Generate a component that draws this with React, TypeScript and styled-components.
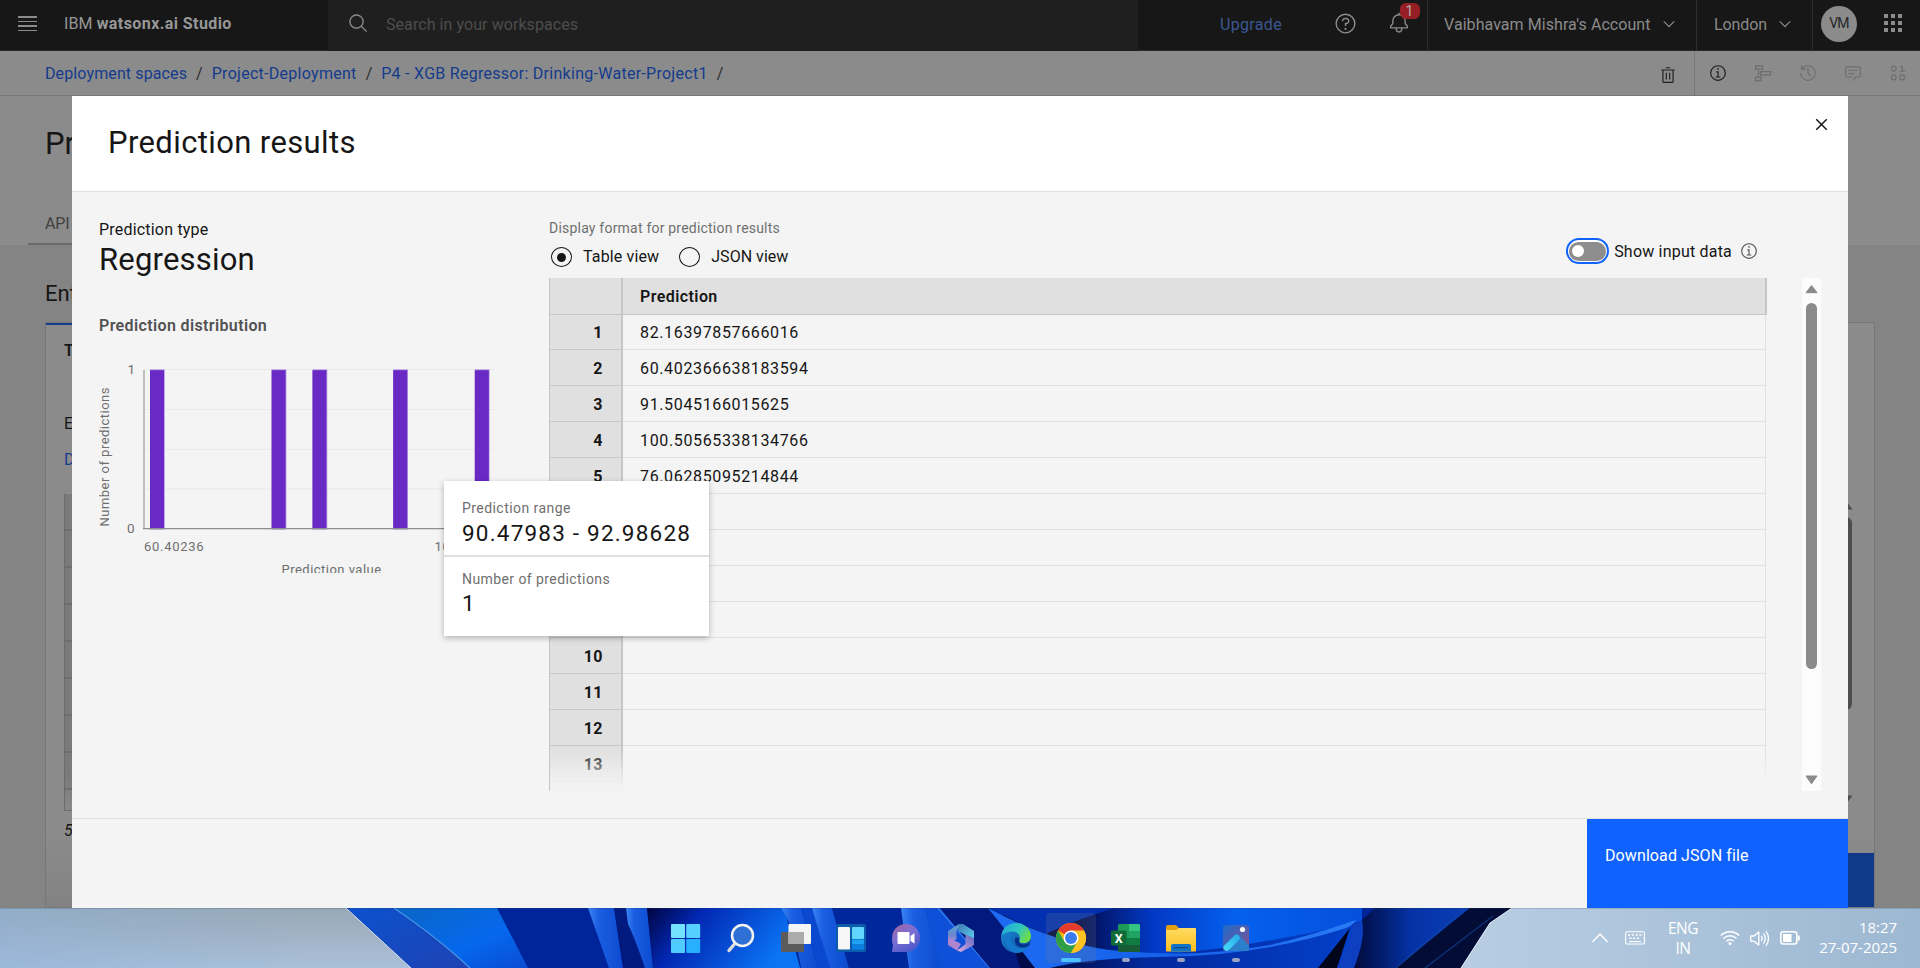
import React from "react";
import styled, { createGlobalStyle, css } from "styled-components";

const GlobalStyle = createGlobalStyle`
  * { box-sizing: border-box; }
  body { margin: 0; overflow: hidden; font-family: Roboto, "Liberation Sans", sans-serif; color: #161616; }
  svg { display: block; flex: none; }
`;

const Screen = styled.div`
  position: relative;
  display: flex;
  flex-direction: column;
  width: 1920px;
  height: 968px;
  overflow: hidden;
`;

/* ---------- text ---------- */

type TextProps = { $size?: number; $line?: number; $track?: number; $weight?: number; $color?: string; $top?: number };

const Text = styled.span<TextProps>`
  display: block;
  white-space: nowrap;
  margin-top: ${(p) => p.$top ?? 0}px;
  font-size: ${(p) => p.$size ?? 16}px;
  line-height: ${(p) => p.$line ?? 22}px;
  letter-spacing: ${(p) => p.$track ?? 0}px;
  font-weight: ${(p) => p.$weight ?? 400};
  color: ${(p) => p.$color ?? "#161616"};
`;

const Spacer = styled.span<{ $w: number }>`
  flex: none;
  width: ${(p) => p.$w}px;
`;

/* ---------- icons ---------- */

const ring = "M16,30A14,14,0,1,1,30,16,14,14,0,0,1,16,30ZM16,4A12,12,0,1,0,28,16,12,12,0,0,0,16,4Z";

const Icon = ({ size, color, children, box = 32 }: { size: number; color: string; box?: number; children: React.ReactNode }) => (
  <svg width={size} height={size} viewBox={`0 0 ${box} ${box}`} fill={color}>
    {children}
  </svg>
);

const InfoIcon = ({ color }: { color: string }) => (
  <Icon size={18} color={color}>
    <path d="M17 22V13H13V15H15V22H12V24H20V22Z" />
    <path d="M16,7a1.5,1.5,0,1,0,1.5,1.5A1.5,1.5,0,0,0,16,7Z" />
    <path d={ring} />
  </Icon>
);

const Chevron = () => (
  <Icon size={18} color="#8b8b8b" box={16}>
    <path d="M8 11 3 6 3.7 5.3 8 9.6 12.3 5.3 13 6z" />
  </Icon>
);

/* ---------- top bar ---------- */

const TopBar = styled.header`
  display: flex;
  height: 51px;
  flex: none;
  background: #171717;
`;

const Brand = styled.div`
  display: flex;
  align-items: center;
  width: 328px;
  padding: 0 0 2px 18px;
  border-bottom: 1px solid #2a2a2a;
`;

const MenuLines = styled.div`
  display: flex;
  flex-direction: column;
  gap: 3px;
  width: 18.5px;
  margin: -1px 27.5px 0 0;
  i { height: 1.5px; background: #8b8b8b; }
`;

const SearchBox = styled.div`
  display: flex;
  align-items: center;
  gap: 17px;
  width: 810px;
  padding: 0 0 3px 20px;
  background: #1f1f1f;
  svg { margin-top: -2px; }
`;

const TopCell = styled.div<{ $width: number; $line?: boolean; $pad?: number }>`
  display: flex;
  align-items: center;
  justify-content: ${(p) => (p.$pad ? "flex-start" : "center")};
  width: ${(p) => p.$width}px;
  padding: 0 0 2px ${(p) => p.$pad ?? 0}px;
  border-bottom: 1px solid #2a2a2a;
  border-left: ${(p) => (p.$line ? "1px solid #2d2d2d" : "0")};
`;

const IconCell = styled(TopCell)`
  padding-bottom: 4px;
`;

const BellHolder = styled.div`
  position: relative;
`;

const Badge = styled.span`
  position: absolute;
  left: 12px;
  top: -9px;
  width: 20px;
  height: 16px;
  border-radius: 6px;
  background: #961f26;
  color: #b0b0b0;
  font-size: 14px;
  line-height: 16px;
  text-align: center;
`;

const Avatar = styled.div`
  width: 36px;
  height: 36px;
  border-radius: 50%;
  background: #8b8b8b;
  color: #262626;
  font-size: 14px;
  line-height: 34px;
  letter-spacing: -0.9px;
  text-align: center;
`;

const Dots = styled.div`
  display: grid;
  grid-template-columns: repeat(3, 4px);
  gap: 3px;
  i { height: 4px; background: #8b8b8b; }
`;

const TopBarView = () => (
  <TopBar>
    <Brand>
      <MenuLines><i /><i /><i /><i /></MenuLines>
      <Text $color="#979797" $track={0.1}>IBM&nbsp;</Text>
      <Text $color="#979797" $weight={700} $track={0.42}>watsonx.ai Studio</Text>
    </Brand>
    <SearchBox>
      <Icon size={21} color="#8b8b8b">
        <path d="M29,27.5859l-7.5521-7.5521a11.0177,11.0177,0,1,0-1.4141,1.4141L27.5859,29ZM4,13a9,9,0,1,1,9,9A9.01,9.01,0,0,1,4,13Z" />
      </Icon>
      <Text $color="#4d4d4d" $track={0.07} $top={1}>Search in your workspaces</Text>
    </SearchBox>
    <TopCell $width={182} $pad={82}>
      <Text $color="#3b5793" $track={0.33} $top={1}>Upgrade</Text>
    </TopCell>
    <IconCell $width={50}>
      <Icon size={23} color="#8b8b8b">
        <path d={ring} />
        <circle cx="16" cy="23.5" r="1.5" />
        <path d="M17,8h-1.5c-2.5,0-4.5,2-4.5,4.5V13h2v-0.5c0-1.4,1.1-2.5,2.5-2.5H17c1.4,0,2.5,1.1,2.5,2.5S18.4,15,17,15h-2v4.5h2V17c2.5,0,4.5-2,4.5-4.5S19.5,8,17,8z" />
      </Icon>
    </IconCell>
    <IconCell $width={57}>
      <BellHolder>
        <Icon size={22} color="#8b8b8b">
          <path d="M28.7071,19.293,26,16.5859V13a10.0136,10.0136,0,0,0-9-9.9492V1H15V3.0508A10.0136,10.0136,0,0,0,6,13v3.5859L3.2929,19.293A1,1,0,0,0,3,20v3a1,1,0,0,0,1,1h7v.7768a5.152,5.152,0,0,0,4.5,5.1987A5.0057,5.0057,0,0,0,21,25V24h7a1,1,0,0,0,1-1V20A1,1,0,0,0,28.7071,19.293ZM19,25a3,3,0,0,1-6,0V24h6Zm8-3H5V20.4141L7.707,17.707A1,1,0,0,0,8,17V13a8,8,0,0,1,16,0v4a1,1,0,0,0,.293.707L27,20.4141Z" />
        </Icon>
        <Badge>1</Badge>
      </BellHolder>
    </IconCell>
    <TopCell $width={269} $line $pad={16}>
      <Text $color="#8b8b8b" $track={0.06} $top={1}>Vaibhavam Mishra's Account</Text>
      <Spacer $w={9} />
      <Chevron />
    </TopCell>
    <TopCell $width={116} $line $pad={17}>
      <Text $color="#8b8b8b" $track={-0.09} $top={1}>London</Text>
      <Spacer $w={9} />
      <Chevron />
    </TopCell>
    <TopCell $width={53} $line>
      <Avatar>VM</Avatar>
    </TopCell>
    <IconCell $width={55}>
      <Dots>{Array.from({ length: 9 }, (_, i) => <i key={i} />)}</Dots>
    </IconCell>
  </TopBar>
);

/* ---------- breadcrumb bar ---------- */

const CrumbBar = styled.nav`
  display: flex;
  flex: none;
  height: 45px;
  background: #8b8b8b;
  border-bottom: 1px solid #767676;
`;

const Crumbs = styled.div`
  display: flex;
  align-items: center;
  gap: 9px;
  flex: 1;
  padding: 1px 0 0 45px;
`;

const ToolCell = styled.div<{ $width?: number; $line?: boolean }>`
  display: flex;
  align-items: center;
  justify-content: center;
  width: ${(p) => p.$width ?? 44.8}px;
  border-right: ${(p) => (p.$line ? "1px solid #767676" : "0")};
  padding: ${(p) => (p.$line ? "4px 0 0 1px" : "0")};
`;

const faded = "#6d6d6d";

const CrumbBarView = () => (
  <CrumbBar>
    <Crumbs>
      <Text $color="#143b8c" $track={0.12}>Deployment spaces</Text>
      <Text $color="#2b2b2b">/</Text>
      <Text $color="#143b8c" $track={0.28}>Project-Deployment</Text>
      <Text $color="#2b2b2b">/</Text>
      <Text $color="#143b8c" $track={0.275}>P4 - XGB Regressor: Drinking-Water-Project1</Text>
      <Text $color="#2b2b2b">/</Text>
    </Crumbs>
    <ToolCell $width={54} $line>
      <Icon size={18} color="#1f1f1f">
        <path d="M12 12h2v12h-2zM18 12h2v12h-2zM12 2h8v2h-8z" />
        <path d="M4,6V8H6V28a2,2,0,0,0,2,2H24a2,2,0,0,0,2-2V8h2V6ZM8,28V8H24V28Z" />
      </Icon>
    </ToolCell>
    <ToolCell $width={46}><InfoIcon color="#1b1b1b" /></ToolCell>
    <ToolCell>
      <svg width="18" height="18" viewBox="0 0 18 18" fill="none" stroke={faded} strokeWidth="1.2">
        <rect x="1.6" y="1.8" width="7" height="3.4" />
        <rect x="6.6" y="7.6" width="10" height="3.4" />
        <rect x="1.6" y="13.2" width="5.4" height="3.6" />
        <path d="M4.2 5.2v4.2h2.4M4.2 9.4v3.8" strokeWidth="0.9" />
      </svg>
    </ToolCell>
    <ToolCell>
      <Icon size={18} color={faded}>
        <path d="M20.59 22 15 16.41 15 7 17 7 17 15.58 22 20.59 20.59 22z" />
        <path d="M16,2A13.94,13.94,0,0,0,6,6.23V2H4v8h8V8H7.08A12,12,0,1,1,4,16H2A14,14,0,1,0,16,2Z" />
      </Icon>
    </ToolCell>
    <ToolCell>
      <Icon size={18} color={faded}>
        <path d="M17.74,30,16,29l4-7h6a2,2,0,0,0,2-2V8a2,2,0,0,0-2-2H6A2,2,0,0,0,4,8V20a2,2,0,0,0,2,2h9v2H6a4,4,0,0,1-4-4V8A4,4,0,0,1,6,4H26a4,4,0,0,1,4,4V20a4,4,0,0,1-4,4H21.16Z" />
        <path d="M8 10h16v2H8zM8 16h10v2H8z" />
      </Icon>
    </ToolCell>
    <ToolCell>
      <svg width="18" height="18" viewBox="0 0 18 18" fill="none" stroke={faded} strokeWidth="1.2">
        <rect x="2.6" y="2.2" width="4.4" height="5" rx="2" />
        <rect x="2.6" y="10.8" width="4.4" height="5" rx="2" />
        <rect x="11" y="10.8" width="4.4" height="5" rx="2" />
        <path d="M11.3 3.2l2-1v5M11 7.2h4.8" />
      </svg>
    </ToolCell>
  </CrumbBar>
);

/* ---------- page behind the dialog ---------- */

const PageHead = styled.div`
  flex: none;
  display: flex;
  flex-direction: column;
  height: 149px;
  background: #8b8b8b;
  padding: 27px 0 0 45px;
`;

const TabLine = styled.div`
  width: 200px;
  height: 2px;
  margin: 8px 0 0 -17px;
  background: #6c6c6c;
`;

const PageBody = styled.div`
  flex: none;
  display: flex;
  flex-direction: column;
  height: 663px;
  padding: 34px 45px 0;
  background: #848484;
`;

const Card = styled.div`
  display: flex;
  justify-content: space-between;
  width: 1830px;
  height: 586px;
  margin-top: 14px;
  border: 1px solid #777;
  background: linear-gradient(#8b8b8b 0 510px, #828282);
`;

const CardLeft = styled.div`
  display: flex;
  flex-direction: column;
  width: 300px;
  padding-left: 18px;
  border-top: 2px solid #143b8c;
`;

const GhostTable = styled.div`
  display: flex;
  flex-direction: column;
  height: 317px;
  margin: 23px 0 9px;
  border: 1px solid #6b6b6b;
  border-top: 0;
  overflow: hidden;
  background: linear-gradient(#7a7a7a 0 280px, #888);
  i { flex: none; height: 37px; border-bottom: 2px solid #6d6d6d; }
`;

const RowCount = styled(Text)`
  font-style: italic;
`;

const CardRight = styled.div`
  display: flex;
  flex-direction: column;
  align-items: flex-end;
  width: 200px;
  padding-top: 178px;
`;

const GhostThumb = styled.div`
  width: 12px;
  height: 195px;
  margin: 7px 22px 85px;
  border-radius: 6px;
  background: #4d4d4d;
`;

const GhostArrow = styled.svg`
  margin-right: 21px;
`;

const GhostButton = styled.div`
  width: 200px;
  height: 54px;
  margin-top: 49px;
  background: #123a8a;
`;

const PageView = () => (
  <>
    <PageHead>
      <Text $size={31} $line={42}>Pr</Text>
      <Text $color="#404040" $top={48} $track={-0.2}>API</Text>
      <TabLine />
    </PageHead>
    <PageBody>
      <Text $size={22} $line={29}>Enter</Text>
      <Card>
        <CardLeft>
          <Text $line={51} $weight={600}>T</Text>
          <Text $top={37}>E</Text>
          <Text $top={14} $color="#143b8c">D</Text>
          <GhostTable>
            {Array.from({ length: 8 }, (_, i) => <i key={i} />)}
          </GhostTable>
          <RowCount>5</RowCount>
        </CardLeft>
        <CardRight>
          <GhostArrow width="13" height="9" viewBox="0 0 13 9"><path d="M6.5 0.5L12.5 8.5H0.5Z" fill="#4d4d4d" /></GhostArrow>
          <GhostThumb />
          <GhostArrow width="13" height="9" viewBox="0 0 13 9"><path d="M0.5 0.5H12.5L6.5 8.5Z" fill="#4d4d4d" /></GhostArrow>
          <GhostButton />
        </CardRight>
      </Card>
    </PageBody>
  </>
);

/* ---------- dialog ---------- */

const Dialog = styled.section`
  position: absolute;
  left: 72px;
  top: 96px;
  display: flex;
  flex-direction: column;
  width: 1776px;
  height: 812px;
  background: #f4f4f4;
`;

const DialogHead = styled.div`
  display: flex;
  justify-content: space-between;
  flex: none;
  height: 96px;
  padding: 27px 15px 0 36px;
  border-bottom: 1px solid #e0e0e0;
  background: #fff;
`;

const CloseButton = styled.div`
  margin-top: -10px;
`;

const DialogBody = styled.div`
  display: flex;
  flex: none;
  height: 626px;
`;

const Summary = styled.div`
  display: flex;
  flex-direction: column;
  flex: none;
  width: 477px;
  padding: 27px 0 0 27px;
`;

const Results = styled.div`
  flex: 1;
  display: flex;
  flex-direction: column;
`;

const Controls = styled.div`
  display: flex;
  justify-content: space-between;
  height: 86px;
  padding-right: 90px;
`;

const FormatGroup = styled.div`
  padding-top: 26px;
`;

const RadioRow = styled.div`
  display: flex;
  align-items: center;
  height: 20px;
  margin: 9px 0 0 2px;
`;

const Radio = styled.span<{ $on?: boolean }>`
  display: grid;
  place-items: center;
  width: 21px;
  height: 20px;
  margin-right: 11px;
  border: 1px solid #161616;
  border-radius: 50%;
  &::after {
    content: "";
    width: 9px;
    height: 9px;
    border-radius: 50%;
    background: ${(p) => (p.$on ? "#161616" : "transparent")};
  }
`;

const ToggleGroup = styled.div`
  display: flex;
  align-items: center;
  height: 26px;
  margin-top: 46px;
`;

const Toggle = styled.span`
  display: flex;
  align-items: center;
  width: 43px;
  height: 26px;
  padding: 1px;
  margin-right: 5px;
  border: 2px solid #0f62fe;
  border-radius: 13px;
  background: #fff;
`;

const Track = styled.span`
  display: flex;
  align-items: center;
  flex: 1;
  height: 19px;
  padding-left: 3px;
  border-radius: 10px;
  background: #8d8d8d;
  &::after {
    content: "";
    width: 12px;
    height: 12px;
    border-radius: 50%;
    background: #fff;
  }
`;

const GridArea = styled.div`
  display: flex;
  justify-content: space-between;
  width: 1272px;
  height: 513px;
`;

const Table = styled.div`
  position: relative;
  display: flex;
  flex-direction: column;
  width: 1218px;
  height: 513px;
  border-left: 1px solid #c6c6c6;
  overflow: hidden;
  &::after {
    content: "";
    position: absolute;
    left: 0;
    right: 0;
    bottom: 0;
    height: 42px;
    background: linear-gradient(rgba(244, 244, 244, 0), rgba(244, 244, 244, 0.9) 85%);
  }
`;

const headCell = css`
  background: #e0e0e0;
  border-bottom: 1px solid #c6c6c6;
`;

const Line = styled.div<{ $height: number }>`
  display: flex;
  flex: none;
  height: ${(p) => p.$height}px;
`;

const IndexCell = styled.div`
  ${headCell}
  display: flex;
  align-items: center;
  justify-content: flex-end;
  flex: none;
  width: 73px;
  padding: 2px 18px 0 0;
  border-right: 2px solid #c6c6c6;
`;

const DataCell = styled.div<{ $head?: boolean }>`
  display: flex;
  align-items: center;
  flex: 1;
  padding: 2px 0 0 17px;
  border-bottom: 1px solid #e0e0e0;
  border-right: 1px solid #e0e0e0;
  margin-right: 1px;
  ${(p) => p.$head && css`${headCell} margin-right: 0; border-right: 2px solid #c6c6c6;`}
`;

const ScrollBar = styled.div`
  display: flex;
  flex-direction: column;
  align-items: center;
  width: 19px;
  height: 513px;
  padding: 6px 0;
  background: #fcfcfc;
`;

const Thumb = styled.div`
  width: 11px;
  height: 369px;
  margin: 9px 0 106px;
  border-radius: 6px;
  background: #8b8b8b;
`;

const ChartHolder = styled.div`
  margin-top: 23px;
`;

const DialogFoot = styled.div`
  display: flex;
  justify-content: flex-end;
  flex: none;
  height: 90px;
  border-top: 1px solid #e0e0e0;
`;

const DownloadButton = styled.div`
  width: 261px;
  height: 89px;
  padding: 26px 0 0 18px;
  background: #0f62fe;
`;

const Tooltip = styled.div`
  position: absolute;
  left: 372px;
  top: 385px;
  width: 265px;
  height: 155px;
  background: #fff;
  box-shadow: 0 2px 6px rgba(0, 0, 0, 0.28);
`;

const TipBlock = styled.div<{ $height: number }>`
  height: ${(p) => p.$height}px;
  padding: 17px 0 0 18px;
  & + & { padding-top: 12px; border-top: 2px solid #e0e0e0; }
`;

const values = ["82.16397857666016", "60.402366638183594", "91.5045166015625", "100.50565338134766", "76.06285095214844"];
const bars = [150, 271.6, 312.5, 393.2, 474.8];

const Chart = () => (
  <svg width="420" height="213" viewBox="99 360 420 213" fontFamily="Roboto, sans-serif" fontSize="13" fill="#6f6f6f">
    {[369.5, 409.5, 449.3, 489].map((y) => (
      <path key={y} d={`M145 ${y}H495`} stroke="#e9e9e9" />
    ))}
    {bars.map((x) => (
      <g key={x}>
        <rect x={x} y="369.3" width="14.8" height="160" fill="#b79be2" />
        <rect x={x} y="370.2" width="14" height="159" fill="#6929c4" />
      </g>
    ))}
    <path d="M144 370V529" stroke="#b4b4b4" strokeWidth="1.7" />
    <path d="M143 528.6H495" stroke="#8d8d8d" strokeWidth="1.2" />
    <text x="127.5" y="374" fontSize="13.5">1</text>
    <text x="127" y="533" fontSize="13.5">0</text>
    <text x="144" y="551" letterSpacing="0.73">60.40236</text>
    <text x="434.5" y="551" letterSpacing="0.73">100.5056</text>
    <text x="281.5" y="573.5" letterSpacing="0.48">Prediction value</text>
    <text transform="translate(108.5 526.5) rotate(-90)" letterSpacing="0.48">Number of predictions</text>
  </svg>
);

const DialogView = () => (
  <Dialog>
    <DialogHead>
      <Text $size={31} $line={40} $track={0.38}>Prediction results</Text>
      <CloseButton>
        <Icon size={23} color="#161616">
          <path d="M17.4141 16 24 9.4141 22.5859 8 16 14.5859 9.4143 8 8 9.4141 14.5859 16 8 22.5859 9.4143 24 16 17.4141 22.5859 24 24 22.5859 17.4141 16z" />
        </Icon>
      </CloseButton>
    </DialogHead>
    <DialogBody>
      <Summary>
        <Text $track={0.2}>Prediction type</Text>
        <Text $size={31} $line={37} $track={0.2}>Regression</Text>
        <Text $weight={600} $color="#525252" $track={0.37} $top={37}>Prediction distribution</Text>
        <ChartHolder><Chart /></ChartHolder>
      </Summary>
      <Results>
        <Controls>
          <FormatGroup>
            <Text $size={14} $line={20} $color="#6f6f6f" $track={0.21}>Display format for prediction results</Text>
            <RadioRow>
              <Radio $on />
              <Text $track={0.14}>Table view</Text>
              <Spacer $w={20} />
              <Radio />
              <Text $track={0.03}>JSON view</Text>
            </RadioRow>
          </FormatGroup>
          <ToggleGroup>
            <Toggle><Track /></Toggle>
            <Text $track={0.2} $top={1}>Show input data</Text>
            <Spacer $w={8} />
            <InfoIcon color="#525252" />
          </ToggleGroup>
        </Controls>
        <GridArea>
          <Table>
            <Line $height={37}>
              <IndexCell />
              <DataCell $head><Text $weight={600} $track={0.42}>Prediction</Text></DataCell>
            </Line>
            {Array.from({ length: 14 }, (_, i) => (
              <Line key={i} $height={i === 0 ? 35 : 36}>
                <IndexCell><Text $weight={700} $track={0.5}>{i < 13 ? i + 1 : ""}</Text></IndexCell>
                <DataCell><Text $track={0.64}>{values[i] ?? ""}</Text></DataCell>
              </Line>
            ))}
          </Table>
          <ScrollBar>
            <svg width="13" height="10" viewBox="0 0 13 10"><path d="M6.5 1.5L12 8.7H1Z" fill="#8b8b8b" stroke="#8b8b8b" strokeLinejoin="round" /></svg>
            <Thumb />
            <svg width="13" height="10" viewBox="0 0 13 10"><path d="M1 1H12L6.5 8.8Z" fill="#8b8b8b" stroke="#8b8b8b" strokeLinejoin="round" /></svg>
          </ScrollBar>
        </GridArea>
      </Results>
    </DialogBody>
    <DialogFoot>
      <DownloadButton><Text $color="#fff" $track={0.1}>Download JSON file</Text></DownloadButton>
    </DialogFoot>
    <Tooltip>
      <TipBlock $height={74}>
        <Text $size={14} $line={20} $track={0.44} $color="#6f6f6f">Prediction range</Text>
        <Text $size={22.5} $line={30} $track={1.2}>90.47983 - 92.98628</Text>
      </TipBlock>
      <TipBlock $height={81}>
        <Text $size={14} $line={20} $track={0.42} $color="#6f6f6f">Number of predictions</Text>
        <Text $size={22.5} $line={28}>1</Text>
      </TipBlock>
    </Tooltip>
  </Dialog>
);

/* ---------- taskbar ---------- */

const TaskBar = styled.footer`
  position: relative;
  display: flex;
  justify-content: flex-end;
  flex: none;
  height: 60px;
  isolation: isolate;
`;

const WallpaperSvg = styled.svg`
  position: absolute;
  inset: 0;
  z-index: -1;
`;

const Wallpaper = () => (
  <WallpaperSvg width="1920" height="60" viewBox="0 0 1920 60" preserveAspectRatio="none">
    <defs>
      <linearGradient id="skyL" x1="0" y1="0" x2="0" y2="1"><stop offset="0" stopColor="#97a9b6" /><stop offset="0.5" stopColor="#a2b3c6" /><stop offset="1" stopColor="#a9c0da" /></linearGradient>
      <linearGradient id="skyTint" x1="0" y1="0" x2="1" y2="0"><stop offset="0" stopColor="#8ab0dc" stopOpacity=".45" /><stop offset="1" stopColor="#8ab0dc" stopOpacity="0" /></linearGradient>
      <linearGradient id="skyR" x1="0" y1="0" x2="1" y2="0"><stop offset="0" stopColor="#b8cde2" /><stop offset="1" stopColor="#9db8d2" /></linearGradient>
      <linearGradient id="r1" x1="0" y1="0" x2="1" y2="1"><stop offset="0" stopColor="#0b52cd" /><stop offset="1" stopColor="#1f42b4" /></linearGradient>
      <linearGradient id="r2" x1="0" y1="0" x2="1" y2="1"><stop offset="0" stopColor="#0a66c4" /><stop offset=".6" stopColor="#0568ee" /><stop offset="1" stopColor="#0b4bd2" /></linearGradient>
      <linearGradient id="core" x1="0" y1="0" x2="1" y2=".3"><stop offset="0" stopColor="#010441" /><stop offset=".35" stopColor="#0228b4" /><stop offset="1" stopColor="#0a74f4" /></linearGradient>
      <linearGradient id="rib" x1="0" y1="0" x2="1" y2="0"><stop offset="0" stopColor="#3a86f4" /><stop offset=".3" stopColor="#1b5ee2" /><stop offset="1" stopColor="#0c4bd0" /></linearGradient>
      <linearGradient id="sweep" x1="0" y1="0" x2="1" y2="0"><stop offset="0" stopColor="#00041c" /><stop offset=".22" stopColor="#010c4c" /><stop offset=".42" stopColor="#0238c4" /><stop offset=".65" stopColor="#0560ee" /><stop offset="1" stopColor="#0550dc" /></linearGradient>
      <linearGradient id="wave" x1="0" y1="0" x2="1" y2="0"><stop offset="0" stopColor="#1d6cf2" /><stop offset=".5" stopColor="#1660ea" /><stop offset="1" stopColor="#2a7cf6" /></linearGradient>
      <linearGradient id="fold" x1="0" y1="0" x2="1" y2="0"><stop offset="0" stopColor="#010a3c" /><stop offset=".5" stopColor="#0533a6" /><stop offset="1" stopColor="#0a3eb4" /></linearGradient>
      <linearGradient id="low" x1="0" y1="0" x2="1" y2="0"><stop offset="0" stopColor="#010836" /><stop offset=".35" stopColor="#02289c" /><stop offset="1" stopColor="#0341cc" /></linearGradient>
    </defs>
    <rect width="420" height="60" fill="url(#skyL)" />
    <rect width="300" height="60" fill="url(#skyTint)" />
    <path d="M346 0H1512L1490 15L1461 60H411Z" fill="#00259a" />
    <path d="M347 0H394L472 60H411Z" fill="url(#r1)" />
    <path d="M394 0H497L528 60H470Q440 32 394 0Z" fill="url(#r2)" />
    <path d="M394 0Q440 32 470 60" stroke="#4390e8" strokeWidth="1.5" fill="none" />
    <path d="M588 0H614L623 60H609Z" fill="url(#rib)" />
    <path d="M614 0H627L645 60H623Z" fill="#001a80" />
    <path d="M626 0H647L653 60H645Q634 28 628 16Z" fill="url(#rib)" />
    <path d="M647 0H784L800 60H653Z" fill="url(#core)" />
    <path d="M781 0H801L818 60H801Q794 18 781 0Z" fill="url(#rib)" />
    <path d="M801 0H813L830 60H818Z" fill="#0a48d0" />
    <path d="M812 0H832L849 60H830Z" fill="url(#rib)" />
    <path d="M832 0H901L910 60H849Z" fill="#01279c" />
    <path d="M901 0H925L942 60H909Z" fill="url(#rib)" />
    <path d="M925 0H940L990 60H941Z" fill="#0e50d8" />
    <path d="M938 0L990 60" stroke="#3378ee" strokeWidth="1.5" />
    <path d="M940 0H990L1060 60H990Z" fill="#031a7c" />
    <path d="M1010 24L1050 60H1020Z" fill="#010a48" />
    <path d="M1040 0H1362V13Q1240 48 1150 49Q1060 44 1000 8Z" fill="url(#sweep)" />
    <path d="M990 0H1114Q1070 14 1046 26Q1015 14 990 0Z" fill="#0230b0" />
    <path d="M1030 60Q1060 50 1110 48Q1200 50 1362 14L1340 60Z" fill="url(#low)" />
    <path d="M988 0Q1060 38 1120 43Q1200 50 1270 37Q1310 28 1356 12Q1352 18 1346 20Q1260 48 1160 49Q1090 50 1050 60H1035Q1012 30 988 0Z" fill="url(#wave)" />
    <path d="M1350 20L1318 60H1337Z" fill="#02051c" />
    <path d="M1352 16Q1352 34 1337 60H1354Q1366 28 1364 13Z" fill="#0d3fc0" />
    <path d="M1362 12L1375 0H1470L1396 60H1354Q1366 30 1362 12Z" fill="url(#fold)" />
    <path d="M1470 0H1512L1490 15L1461 60H1396Z" fill="#020c34" />
    <path d="M1466 0L1396 60M1493 8L1425 60" stroke="#1648a8" strokeWidth="1.5" opacity=".6" />
    <path d="M1512 0H1920V60H1461L1490 15Z" fill="url(#skyR)" />
    <path d="M1512 0L1490 15L1461 60M346 0L411 60" stroke="#dbe8f6" strokeWidth="1" fill="none" />
    <rect width="1920" height="1" fill="#30405a" opacity=".2" />
  </WallpaperSvg>
);

const Apps = styled.div`
  position: absolute;
  left: 661px;
  top: 5px;
  display: flex;
  gap: 5px;
`;

const AppTile = styled.div<{ $state?: "active" | "open" }>`
  display: flex;
  flex-direction: column;
  align-items: center;
  justify-content: space-between;
  width: 50px;
  height: 50px;
  padding: 9px 0 1px;
  border-radius: 4px;
  background: ${(p) => (p.$state === "active" ? "rgba(120, 124, 140, 0.2)" : "transparent")};
  &::after {
    content: "";
    width: ${(p) => (p.$state === "active" ? 20 : 8)}px;
    height: 4px;
    border-radius: 2px;
    background: ${(p) => (p.$state === "active" ? "#4cc2ff" : p.$state ? "#9aa3c4" : "transparent")};
  }
`;

const Glyph = ({ children }: { children: React.ReactNode }) => (
  <svg width="32" height="32" viewBox="0 0 32 32">{children}</svg>
);

const AppsView = () => (
  <Apps>
    <AppTile>
      <Glyph>
        <rect x="1" y="2" width="14" height="14" rx="1" fill="#74e2ff" />
        <rect x="16.2" y="2" width="14" height="14" rx="1" fill="#55cfff" />
        <rect x="1" y="17" width="14" height="14" rx="1" fill="#4fcbff" />
        <rect x="16.2" y="17" width="14" height="14" rx="1" fill="#27b0ff" />
      </Glyph>
    </AppTile>
    <AppTile>
      <Glyph>
        <path d="M9.5 22L4 28.5" stroke="#dcdcdc" strokeWidth="3.4" strokeLinecap="round" />
        <circle cx="17.5" cy="13.5" r="10.5" fill="#2f70d6" stroke="#f2f2f2" strokeWidth="2.5" />
      </Glyph>
    </AppTile>
    <AppTile>
      <Glyph>
        <rect x="1" y="10" width="23" height="20" rx="1" fill="#5b5b5b" />
        <rect x="8.5" y="2" width="22.5" height="20" rx="1" fill="#f4f4f4" />
        <rect x="8.5" y="10" width="15.5" height="12" fill="#ababab" />
      </Glyph>
    </AppTile>
    <AppTile>
      <Glyph>
        <rect x="1" y="2" width="30" height="28" rx="2" fill="#0b5cab" />
        <rect x="3" y="5" width="12" height="22.5" rx="1" fill="#f6f6f6" />
        <rect x="17" y="5" width="12" height="12" rx="1" fill="#62d5ff" />
        <rect x="17" y="17.5" width="12" height="5" fill="#1fa2f4" />
        <rect x="17" y="22.8" width="12" height="5" rx="1" fill="#0a7fe4" />
      </Glyph>
    </AppTile>
    <AppTile>
      <Glyph>
        <defs><linearGradient id="chat" x1="0" y1="0" x2=".6" y2="1"><stop offset="0" stopColor="#a8649c" /><stop offset=".5" stopColor="#7a6fd4" /><stop offset="1" stopColor="#5059c9" /></linearGradient></defs>
        <path d="M16 2C24 2 30 8 30 16S24 30 16 30H2L3 23C2 21 2 18.5 2 16C2 8 8 2 16 2Z" fill="url(#chat)" />
        <rect x="7.5" y="10" width="12" height="12" rx="1" fill="#fff" />
        <path d="M20.5 14L24.5 11V21.5L20.5 19Z" fill="#fff" />
      </Glyph>
    </AppTile>
    <AppTile>
      <Glyph>
        <defs>
          <linearGradient id="m1" x1="0" y1="0" x2="0" y2="1"><stop offset="0" stopColor="#5aa4d4" /><stop offset=".5" stopColor="#6a86cc" /><stop offset="1" stopColor="#c28ad4" /></linearGradient>
          <linearGradient id="m2" x1="0" y1="0" x2="1" y2="1"><stop offset="0" stopColor="#3f78b4" /><stop offset="1" stopColor="#5cd0ee" /></linearGradient>
          <linearGradient id="m3" x1="1" y1="0" x2="0" y2="1"><stop offset="0" stopColor="#5a6ac0" /><stop offset="1" stopColor="#e0a6dc" /></linearGradient>
        </defs>
        <path d="M14 2L18 3L11.5 8V17L3 23V9Z" fill="url(#m1)" />
        <path d="M14 2H18L29 9V17L20.5 13L13 9Z" fill="url(#m2)" />
        <path d="M29 16V23L16 30L12 28.5L20.5 22V12.5Z" fill="url(#m3)" />
        <path d="M3 16L11.5 19.5L16 22L12 28.5L3 23Z" fill="#b184d0" />
      </Glyph>
    </AppTile>
    <AppTile>
      <Glyph>
        <defs>
          <linearGradient id="e1" x1="0" y1="0" x2="1" y2=".5"><stop offset="0" stopColor="#1ea2dc" /><stop offset=".6" stopColor="#2fc7c0" /><stop offset="1" stopColor="#6bdc4a" /></linearGradient>
          <linearGradient id="e2" x1="0" y1="0" x2="1" y2="1"><stop offset="0" stopColor="#1b8ad8" /><stop offset="1" stopColor="#0f4f9e" /></linearGradient>
        </defs>
        <circle cx="16" cy="16" r="15" fill="url(#e2)" />
        <path d="M1.5 14C2 6 8 1 16 1C25 1 31 7.5 31 14C31 18.5 27.5 21 24 21C20 21 18.5 19.5 19.5 17.5C21 14 18 9.5 12.5 9.5C7 9.5 2.5 12 1.5 14Z" fill="url(#e1)" />
        <path d="M12.5 9.5C8 15 11 26 22 26C25 26 28 24.5 29 23.5C26.5 28 22 31 16.5 31C9 30.5 4.5 22 7 15C8 12.5 10 10.5 12.5 9.5Z" fill="#1478cc" />
        <path d="M19.5 17.5C18 20 19.5 22.5 23.5 22.5C26.5 22.5 28.5 21.5 30 20L29 23.5C22 28 13.5 24 15 16.5C16.5 15 18.5 15 19.5 17.5Z" fill="#04308c" />
      </Glyph>
    </AppTile>
    <AppTile $state="active">
      <Glyph>
        <circle cx="16" cy="16" r="15" fill="#fbbc05" />
        <path d="M16 16L3 8.5A15 15 0 0 1 29 8.5Z" fill="#e33b2e" />
        <path d="M3 8.5A15 15 0 0 0 16 31L22.5 19.5L16 16L9.5 19.5Z" fill="#2f9e49" />
        <path d="M16 8.5H29A15 15 0 0 1 16 31L22.5 19.5Z" fill="#fcc221" />
        <circle cx="16" cy="16" r="7.5" fill="#fff" />
        <circle cx="16" cy="16" r="6" fill="#3b7ded" />
      </Glyph>
    </AppTile>
    <AppTile $state="open">
      <Glyph>
        <rect x="8" y="2" width="22" height="28" rx="1.5" fill="#1d9a55" />
        <path d="M19 2H28.5A1.5 1.5 0 0 1 30 3.5V9H19Z" fill="#33c481" />
        <path d="M19 9H30V16H19Z" fill="#21a366" />
        <path d="M8 16H30V23H8Z" fill="#107c41" />
        <path d="M8 23H30V28.5A1.5 1.5 0 0 1 28.5 30H9.5A1.5 1.5 0 0 1 8 28.5Z" fill="#185c37" />
        <rect x="1" y="8.5" width="15.5" height="15" rx="1.5" fill="#0f6b38" />
        <text x="8.7" y="20.6" fontFamily="Roboto, sans-serif" fontWeight="700" fontSize="12.5" fill="#fff" textAnchor="middle">X</text>
      </Glyph>
    </AppTile>
    <AppTile $state="open">
      <Glyph>
        <defs><linearGradient id="folder" x1="0" y1="0" x2="0" y2="1"><stop offset="0" stopColor="#ffdb63" /><stop offset="1" stopColor="#fbbd1c" /></linearGradient></defs>
        <path d="M1 5A2 2 0 0 1 3 3H11L14 6H29A2 2 0 0 1 31 8V12H1Z" fill="#dfa012" />
        <path d="M1 8H11L14 6H30A1 1 0 0 1 31 7V28.5A1 1 0 0 1 30 29.5H2A1 1 0 0 1 1 28.5Z" fill="url(#folder)" />
        <path d="M6 29.5V24A2 2 0 0 1 8 22H24A2 2 0 0 1 26 24V29.5Z" fill="#1273c4" />
        <rect x="9" y="25" width="14" height="1.2" fill="#0a4a86" />
      </Glyph>
    </AppTile>
    <AppTile $state="open">
      <Glyph>
        <defs>
          <linearGradient id="photo" x1="0" y1="0" x2="1" y2="1"><stop offset="0" stopColor="#1f6ac8" /><stop offset=".6" stopColor="#5a5ca8" /><stop offset="1" stopColor="#8a4f90" /></linearGradient>
          <linearGradient id="hill" x1="0" y1="1" x2="1" y2="0"><stop offset="0" stopColor="#44d4f6" /><stop offset="1" stopColor="#2bb0ea" /></linearGradient>
        </defs>
        <rect x="3" y="3" width="26" height="26" rx="2.5" fill="url(#photo)" />
        <path d="M14 13.5Q16.5 11 19 13.500L29 23.500V26.500Q29 29 26.500 29H8Z" fill="#2a80cc" />
        <path d="M6.8 25.5L16.500 16" stroke="url(#hill)" strokeWidth="6.5" strokeLinecap="round" />
        <circle cx="22.5" cy="7.5" r="2.6" fill="#f4f4f4" />
      </Glyph>
    </AppTile>
  </Apps>
);

const Tray = styled.div`
  display: flex;
  align-items: center;
  height: 60px;
  padding-right: 23px;
  font-family: "Open Sans", "Noto Sans", sans-serif;
`;

const TrayLines = styled.div<{ $width: number; $align: "center" | "right"; $size: number; $track: number; $lift?: number }>`
  width: ${(p) => p.$width}px;
  margin-top: ${(p) => -(p.$lift ?? 0)}px;
  text-align: ${(p) => p.$align};
  font-size: ${(p) => p.$size}px;
  line-height: 20px;
  letter-spacing: ${(p) => p.$track}px;
  color: #fff;
  white-space: nowrap;
`;

const TrayView = () => (
  <Tray>
    <svg width="16" height="10" viewBox="0 0 16 10" fill="none" stroke="#fff" strokeWidth="1.4"><path d="M.5 9L8 1L15.5 9" /></svg>
    <Spacer $w={17} />
    <svg width="20" height="14" viewBox="0 0 20 14" fill="none" stroke="#fff" strokeWidth="1.1">
      <rect x=".6" y=".8" width="18.8" height="12.2" rx="1.5" />
      <path d="M3 4H17.5M4.5 7.2H16" strokeDasharray="2 1.8" strokeWidth="1.5" />
      <path d="M4 10.6H16" />
    </svg>
    <Spacer $w={18} />
    <TrayLines $width={40} $align="center" $size={15.5} $track={-0.6}>ENG<br />IN</TrayLines>
    <Spacer $w={17} />
    <svg width="20" height="16" viewBox="0 0 20 16" fill="none" stroke="#fff" strokeWidth="1.5">
      <path d="M.8 5.5A13 13 0 0 1 19.2 5.5M3.5 8.5A9.2 9.2 0 0 1 16.5 8.5M6.3 11.3A5.3 5.3 0 0 1 13.7 11.3" />
      <circle cx="10" cy="13.6" r="1.5" fill="#fff" stroke="none" />
    </svg>
    <Spacer $w={10} />
    <svg width="20" height="17" viewBox="0 0 20 17" fill="none" stroke="#fff" strokeWidth="1.3">
      <path d="M.7 6H4L8.8 2V15L4 11.2H.7Z" strokeLinejoin="round" />
      <path d="M11.3 5.8Q13 8.5 11.3 11.2M13.7 3.4Q16.7 8.5 13.7 13.6M16 1Q21 8.5 16 16" />
    </svg>
    <Spacer $w={10} />
    <svg width="20" height="14" viewBox="0 0 20 14" fill="none" stroke="#fff" strokeWidth="1.6">
      <rect x=".8" y=".8" width="16" height="12.2" rx="2.5" />
      <rect x="3" y="3" width="8.5" height="8" fill="#fff" stroke="none" />
      <path d="M18.7 4.5V9.5" strokeWidth="2" />
    </svg>
    <Spacer $w={16} />
    <TrayLines $width={81} $align="right" $size={15} $track={-0.05} $lift={2}>18:27<br />27-07-2025</TrayLines>
  </Tray>
);

export default function App() {
  return (
    <>
      <GlobalStyle />
      <Screen>
        <TopBarView />
        <CrumbBarView />
        <PageView />
        <DialogView />
        <TaskBar>
          <Wallpaper />
          <AppsView />
          <TrayView />
        </TaskBar>
      </Screen>
    </>
  );
}
